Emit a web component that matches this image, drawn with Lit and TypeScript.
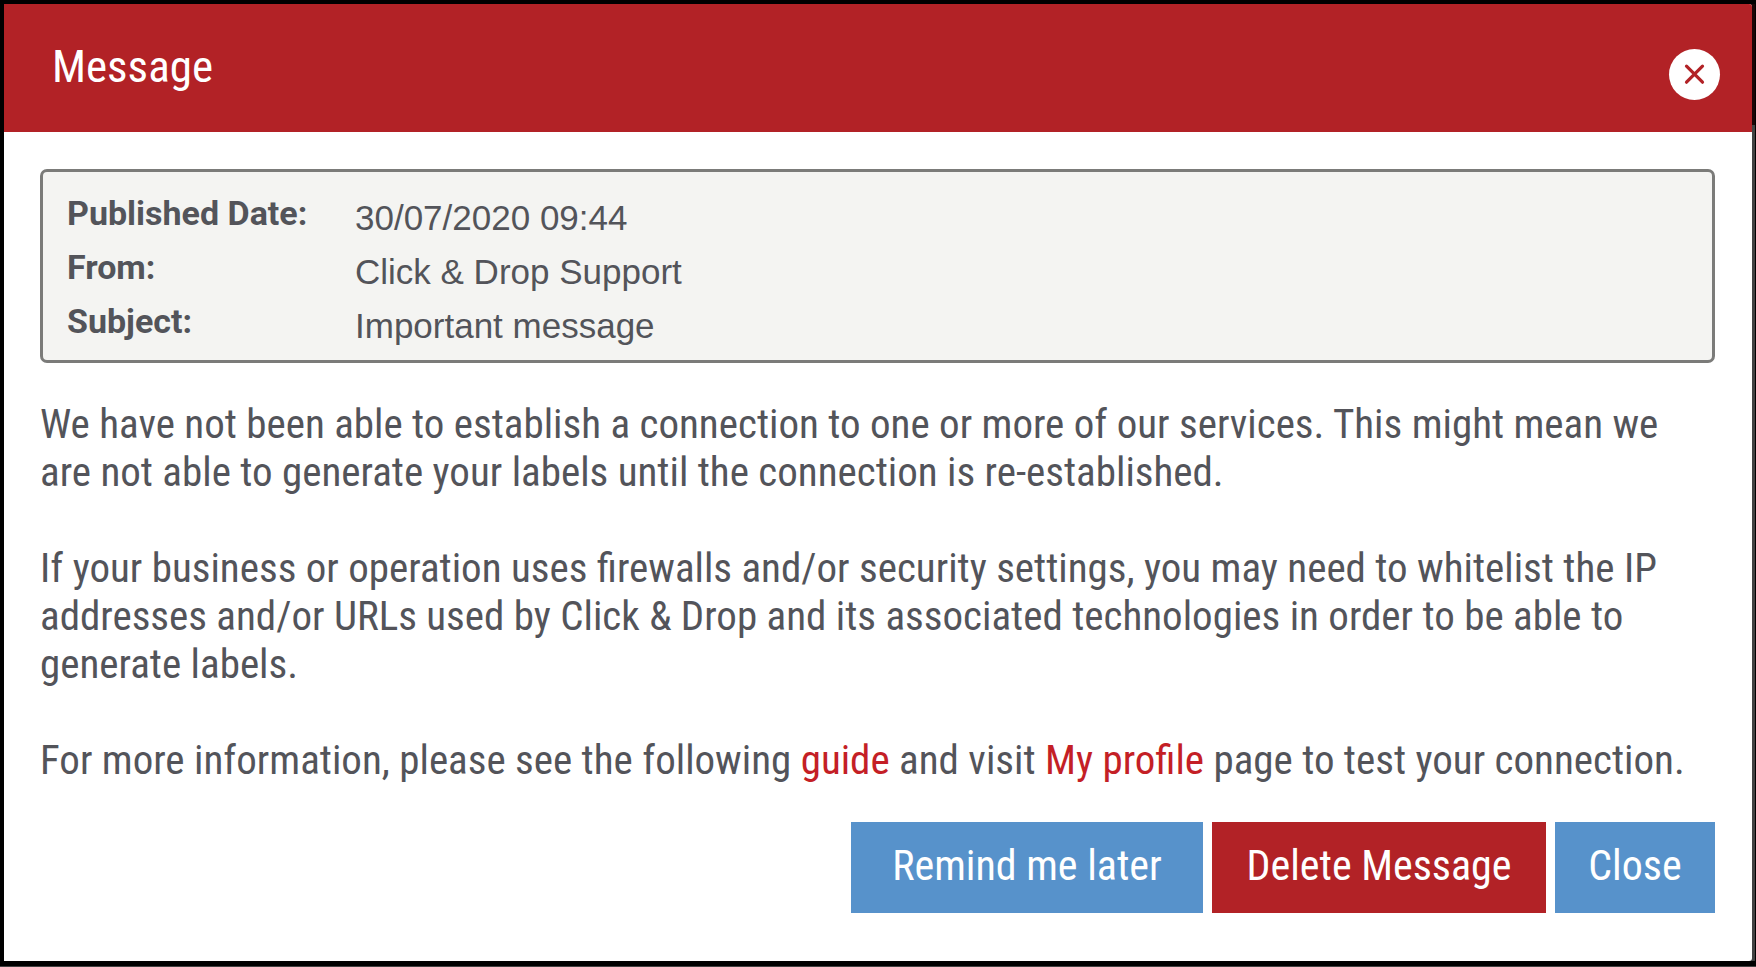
import { LitElement, html, css } from "lit";
import { customElement, state } from "lit/decorators.js";

interface Detail {
  label: string;
  value: string;
}

@customElement("app-root")
export class AppRoot extends LitElement {
  static styles = css`
    :host {
      display: block;
      --red: #b22226;
      --blue: #5792cb;
      --ink: #53545a;
      font-family: "Roboto Condensed", Roboto, "Liberation Sans", sans-serif;
      color: var(--ink);
    }
    * {
      box-sizing: border-box;
    }
    .backdrop {
      display: flex;
      min-height: 100vh;
      padding: 4px 1px 5px 4px;
      background: #000;
      border-bottom: 1px solid #424242;
    }
    .edge {
      display: flex;
      flex: 1;
      min-width: 0;
      padding-right: 3px;
      background: linear-gradient(#1c0506 121px, #424242 121px);
    }
    .dialog {
      flex: 1;
      min-width: 0;
      background: #fff;
      border-radius: 0 3px 3px 0;
      overflow: hidden;
    }
    .header {
      display: flex;
      align-items: flex-start;
      justify-content: space-between;
      padding: 37px 32px 39px 48px;
      background: var(--red);
      color: #fff;
    }
    .title {
      margin: 0;
      font-size: 45px;
      line-height: 52px;
      font-weight: 400;
    }
    .dismiss {
      width: 51px;
      height: 51px;
      margin: 8px 0 -8px;
      padding: 0;
      border: 0;
      border-radius: 50%;
      background: #fff;
      color: var(--red);
      cursor: pointer;
    }
    .dismiss svg {
      display: block;
      width: 51px;
      height: 51px;
    }
    .content {
      padding: 37px 37px 48px 36px;
    }
    .details {
      display: grid;
      grid-template-columns: 288px 1fr;
      margin: 0 0 37px;
      padding: 19px 24px 7px;
      border: 3px solid #7b7b79;
      border-radius: 7px;
      background: #f4f4f2;
    }
    .label {
      font-family: Roboto, sans-serif;
      font-size: 34px;
      line-height: 44px;
      font-weight: 700;
    }
    .value {
      margin: 0;
      font-family: "Liberation Sans", Arial, sans-serif;
      font-size: 35px;
      line-height: 54px;
    }
    .text {
      margin: 0 0 48px;
      font-size: 41px;
      line-height: 48px;
    }
    .text:last-of-type {
      margin-bottom: 38px;
    }
    .link {
      color: #c41f26;
      text-decoration: none;
    }
    .actions {
      display: flex;
      flex-wrap: wrap;
      justify-content: flex-end;
      gap: 9px;
    }
    .action {
      min-width: 160px;
      padding: 20px 32px 23px;
      border: 0;
      background: var(--blue);
      color: #fff;
      font-family: inherit;
      font-size: 42px;
      line-height: 48px;
      white-space: nowrap;
      cursor: pointer;
    }
    .action.wide {
      min-width: 352px;
    }
    .action.danger {
      min-width: 334px;
      background: var(--red);
    }
  `;

  @state() private details: Detail[] = [
    { label: "Published Date:", value: "30/07/2020 09:44" },
    { label: "From:", value: "Click & Drop Support" },
    { label: "Subject:", value: "Important message" },
  ];

  render() {
    return html`
      <div class="backdrop">
        <div class="edge">
          <section class="dialog" role="dialog" aria-labelledby="title">
            <header class="header">
              <h1 class="title" id="title">Message</h1>
              <button class="dismiss" type="button" aria-label="Close message">
                <svg viewBox="0 0 51 51" aria-hidden="true">
                  <path
                    d="M17.5 17.2 33.5 33.2M33.5 17.2 17.5 33.2"
                    fill="none"
                    stroke="currentColor"
                    stroke-width="3.2"
                    stroke-linecap="round"
                  />
                </svg>
              </button>
            </header>
            <div class="content">
              <dl class="details">
                ${this.details.map(
                  (d) => html`<dt class="label">${d.label}</dt>
                    <dd class="value">${d.value}</dd>`
                )}
              </dl>
              <p class="text">
                We have not been able to establish a connection to one or more of our services. This
                might mean we are not able to generate your labels until the connection is
                re-established.
              </p>
              <p class="text">
                If your business or operation uses firewalls and/or security settings, you may need
                to whitelist the IP addresses and/or URLs used by Click &amp; Drop and its associated
                technologies in order to be able to generate labels.
              </p>
              <p class="text">
                For more information, please see the following
                <a class="link" href="#guide">guide</a> and visit
                <a class="link" href="#profile">My profile</a> page to test your connection.
              </p>
              <div class="actions">
                <button class="action wide" type="button">Remind me later</button>
                <button class="action danger" type="button">Delete Message</button>
                <button class="action" type="button">Close</button>
              </div>
            </div>
          </section>
        </div>
      </div>
    `;
  }
}
